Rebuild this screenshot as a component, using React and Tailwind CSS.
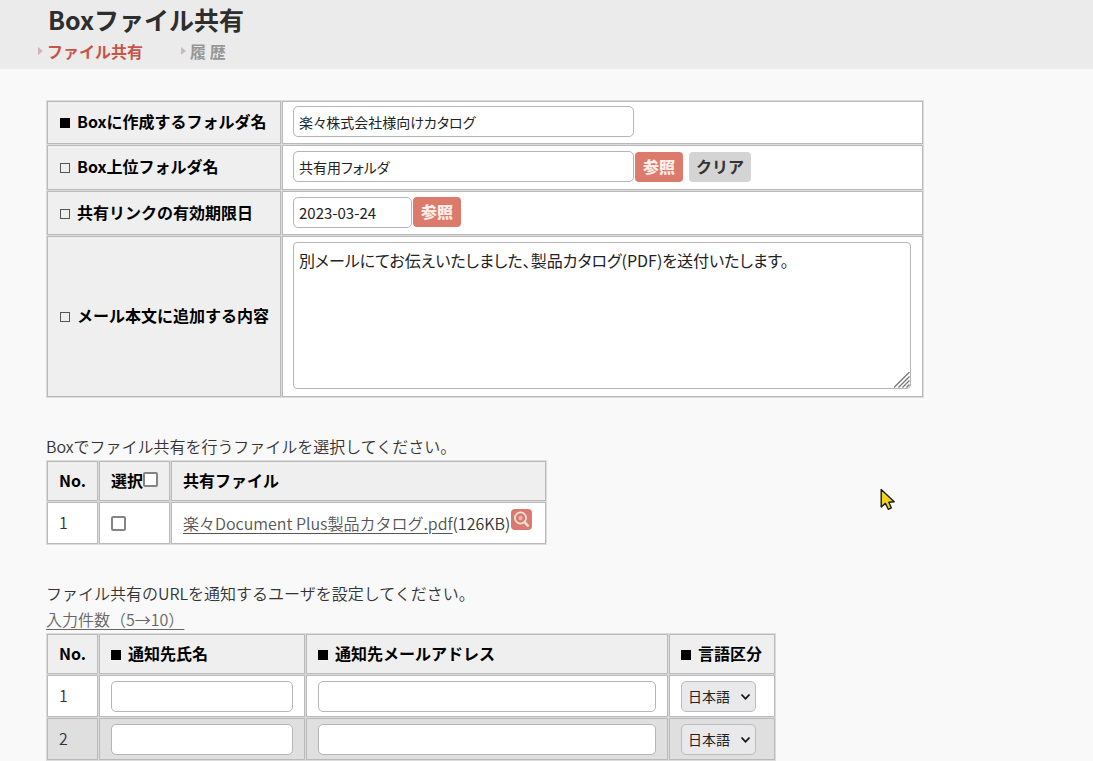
const cell = 'border border-[#b9b9b9] px-[11px] text-left'
const textCell = `${cell} pb-[3px]`
const formCell = `${cell} bg-white pl-[10px] pb-[2px]`
const head = `${cell} bg-[#efefef] pb-[3px] font-bold text-black`
const fieldBase = 'h-[31px] rounded-[5px] border border-[#b5b5b5] bg-white px-[5px] font-normal text-[#222] [font-feature-settings:"palt"]'
const field = `${fieldBase} text-sm`
const tableBase = 'border-separate border-spacing-px bg-[#dcdcdc]'
const browse = 'h-[30px] rounded-[4px] bg-[#dc7a6c] px-2 pb-[2px] text-base font-black text-[#fdeeea]'

function Mark({ required }) {
  return required ? (
    <span className="mr-[7px] inline-block size-[10px] bg-black" aria-hidden="true" />
  ) : (
    <span className="mr-[7px] inline-block size-[10px] border border-[#555]" aria-hidden="true" />
  )
}

function Label({ htmlFor, required, children }) {
  return (
    <label htmlFor={htmlFor} className="whitespace-nowrap pl-px">
      <Mark required={required} />
      {children}
    </label>
  )
}

function Tab({ active, children }) {
  return (
    <a href="#" className={`flex items-center gap-1 ${active ? 'text-[#c65548]' : 'text-[#969696]'}`}>
      <svg className="h-2 w-[5px]" viewBox="0 0 5 8" aria-hidden="true">
        <path d="M0 0 L5 4 L0 8 Z" fill={active ? '#d3b4b6' : '#c3bdbd'} />
      </svg>
      {children}
    </a>
  )
}

function Check({ label }) {
  return (
    <input
      type="checkbox"
      aria-label={label}
      className="size-[15px] shrink-0 appearance-none rounded-[2px] border-2 border-[#858585] bg-white checked:bg-[#858585]"
    />
  )
}

function LanguageSelect({ label }) {
  return (
    <div className="relative w-[75px]">
      <select
        aria-label={label}
        className="block h-[31px] w-full appearance-none rounded-[5px] border border-[#bcbcbc] bg-[#e9e9eb] pl-[6px] text-sm font-normal text-[#222]"
      >
        <option>日本語</option>
        <option>英語</option>
      </select>
      <svg className="pointer-events-none absolute right-[5px] top-3 h-2 w-[11px]" viewBox="0 0 11 8" aria-hidden="true">
        <path d="M1.5 1.5 L5.5 5.8 L9.5 1.5" fill="none" stroke="#111" strokeWidth="1.8" />
      </svg>
    </div>
  )
}

export default function App() {
  return (
    <div className="relative min-h-screen overflow-hidden bg-[#f9f9f9] font-['Noto_Sans_CJK_JP',sans-serif] text-base leading-6 text-[#333] [font-weight:350]">
      <header className="h-[69px] bg-[#ebebeb] pl-[38px] pt-1">
        <h1 className="pl-[10px] text-[25px] font-bold leading-[30px] text-[#2e2e2e]">Boxファイル共有</h1>
        <nav className="mt-[5px] flex gap-[38px] font-bold">
          <Tab active>ファイル共有</Tab>
          <Tab>履 歴</Tab>
        </nav>
      </header>

      <main className="px-[46px] pt-[31px]">
        <table className={`${tableBase} w-full max-w-[878px]`}>
          <tbody>
            <tr className="h-[43px]">
              <th className={`${head} w-[234px]`}>
                <Label htmlFor="folder" required>Boxに作成するフォルダ名</Label>
              </th>
              <td className={formCell}>
                <input id="folder" defaultValue="楽々株式会社様向けカタログ" className={`${field} block w-[341px]`} />
              </td>
            </tr>
            <tr className="h-[45px]">
              <th className={head}>
                <Label htmlFor="parent">Box上位フォルダ名</Label>
              </th>
              <td className={formCell}>
                <div className="flex items-center">
                  <input id="parent" defaultValue="共有用フォルダ" className={`${field} w-[341px]`} />
                  <button type="button" className={`${browse} ml-px`}>参照</button>
                  <button type="button" className="ml-[6px] h-[30px] rounded-[4px] bg-[#d4d4d4] px-[7px] pb-[2px] font-bold text-[#333]">クリア</button>
                </div>
              </td>
            </tr>
            <tr className="h-11">
              <th className={head}>
                <Label htmlFor="expiry">共有リンクの有効期限日</Label>
              </th>
              <td className={formCell}>
                <div className="flex items-center">
                  <input id="expiry" defaultValue="2023-03-24" className={`${fieldBase} w-[119px] text-[15px]`} />
                  <button type="button" className={`${browse} ml-px`}>参照</button>
                </div>
              </td>
            </tr>
            <tr className="h-[161px]">
              <th className={head}>
                <Label htmlFor="body">メール本文に追加する内容</Label>
              </th>
              <td className={formCell}>
                <div className="relative max-w-[618px]">
                  <textarea
                    id="body"
                    defaultValue="別メールにてお伝えいたしました、製品カタログ(PDF)を送付いたします。"
                    className="block h-[147px] w-full resize-none rounded-[4px] border border-[#b5b5b5] bg-white px-[5px] py-[5px] font-normal leading-6 text-[#222] [font-feature-settings:'palt']"
                  />
                  <svg className="pointer-events-none absolute bottom-px right-px size-4" viewBox="0 0 16 16" aria-hidden="true">
                    <path d="M0 15.5 L15.5 0 M4.5 15.5 L15.5 4.5 M8.5 15.5 L15.5 8.5 M12.5 15.5 L15.5 12.5" stroke="#777" strokeWidth="1.3" />
                  </svg>
                </div>
              </td>
            </tr>
          </tbody>
        </table>

        <section className="mt-9">
          <p>Boxでファイル共有を行うファイルを選択してください。</p>
          <table className={`${tableBase} mt-[2px] w-[501px]`}>
            <thead>
              <tr className="h-10">
                <th className={`${head} w-[49px]`}>No.</th>
                <th className={`${head} w-[71px]`}>
                  <div className="flex items-center">
                    <span className="whitespace-nowrap">選択</span>
                    <Check label="すべて選択" />
                  </div>
                </th>
                <th className={head}>共有ファイル</th>
              </tr>
            </thead>
            <tbody>
              <tr className="h-[42px] bg-white">
                <td className={textCell}>1</td>
                <td className={cell}>
                  <div className="flex"><Check label="1を選択" /></div>
                </td>
                <td className={cell}>
                  <div className="flex items-center whitespace-nowrap">
                    <a href="#" className="text-[#555] underline underline-offset-[3px]">楽々Document Plus製品カタログ.pdf</a>
                    <span>(126KB)</span>
                    <button type="button" aria-label="プレビュー" className="mb-2 ml-px size-[21px] shrink-0 rounded-[4px] bg-[#d97a70]">
                      <svg className="size-[21px]" viewBox="0 0 21 21" fill="none" stroke="#f8e0d8" aria-hidden="true">
                        <circle cx="9.5" cy="9" r="5.6" strokeWidth="1.8" />
                        <circle cx="9.5" cy="9" r="2.2" fill="#efb5aa" stroke="none" />
                        <path d="M13.6 13.2 L17.5 17.5" strokeWidth="2.6" />
                      </svg>
                    </button>
                  </div>
                </td>
              </tr>
            </tbody>
          </table>
        </section>

        <section className="mt-9">
          <p>ファイル共有のURLを通知するユーザを設定してください。</p>
          <p className="mt-[2px]">
            <a href="#" className="text-[#666] underline underline-offset-[3px]">入力件数（5→10）</a>
          </p>
          <table className={`${tableBase} mt-[2px] w-[730px]`}>
            <thead>
              <tr className="h-10">
                <th className={`${head} w-[49px]`}>No.</th>
                <th className={`${head} w-[206px]`}><Mark required />通知先氏名</th>
                <th className={head}><Mark required />通知先メールアドレス</th>
                <th className={`${head} w-[106px] whitespace-nowrap`}><Mark required />言語区分</th>
              </tr>
            </thead>
            <tbody>
              {[1, 2].map((n) => (
                <tr key={n} className="h-[42px] bg-white even:bg-[#dfdfdf]">
                  <td className={textCell}>{n}</td>
                  <td className={cell}>
                    <input aria-label={`通知先氏名 ${n}`} className={`${field} block w-full`} />
                  </td>
                  <td className={cell}>
                    <input type="email" aria-label={`通知先メールアドレス ${n}`} className={`${field} block w-full`} />
                  </td>
                  <td className={cell}>
                    <LanguageSelect label={`言語区分 ${n}`} />
                  </td>
                </tr>
              ))}
            </tbody>
          </table>
        </section>
      </main>

      <svg className="pointer-events-none absolute left-[880px] top-[488px] h-[23px] w-4" viewBox="0 0 16 23" aria-hidden="true">
        <path d="M1.2 1.5 V19 L5.4 15.4 L8.3 21.3 L11.3 19.8 L8.8 14.3 L14.2 13.8 Z" fill="#f2d21c" stroke="#1c1c1c" strokeWidth="1.4" strokeLinejoin="round" />
      </svg>
    </div>
  )
}
